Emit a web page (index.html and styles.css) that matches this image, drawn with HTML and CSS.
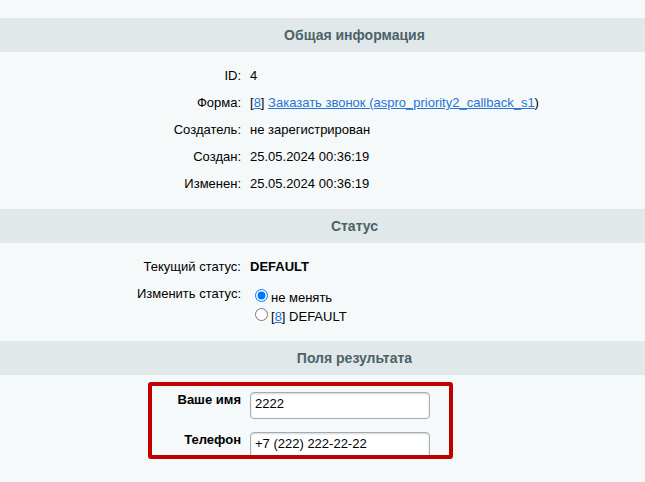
FILE: index.html
```html
<!DOCTYPE html>
<html lang="ru">
<head>
<meta charset="utf-8">
<title>Результат формы</title>
<link rel="stylesheet" href="styles.css">
</head>
<body>
<div class="page">
  <div class="heading">Общая информация</div>
  <div class="section">
    <div class="row"><div class="label">ID:</div><div class="value">4</div></div>
    <div class="row"><div class="label">Форма:</div><div class="value">[<a href="#">8</a>] <a href="#">Заказать звонок (aspro_priority2_callback_s1</a>)</div></div>
    <div class="row"><div class="label">Создатель:</div><div class="value">не зарегистрирован</div></div>
    <div class="row"><div class="label">Создан:</div><div class="value">25.05.2024 00:36:19</div></div>
    <div class="row"><div class="label">Изменен:</div><div class="value">25.05.2024 00:36:19</div></div>
  </div>

  <div class="heading">Статус</div>
  <div class="section section-status">
    <div class="row"><div class="label">Текущий статус:</div><div class="value"><b>DEFAULT</b></div></div>
    <div class="row">
      <div class="label">Изменить статус:</div>
      <div class="value">
        <label class="opt"><input type="radio" name="st" checked><span>не менять</span></label>
        <label class="opt"><input type="radio" name="st"><span>[<a href="#">8</a>] DEFAULT</span></label>
      </div>
    </div>
  </div>

  <div class="heading">Поля результата</div>
  <div class="section-result">
    <div class="frame">
      <div class="frow"><div class="flabel">Ваше имя</div><div class="fvalue"><input class="field" type="text" value="2222"></div></div>
      <div class="frow"><div class="flabel">Телефон</div><div class="fvalue"><input class="field" type="text" value="+7 (222) 222-22-22"></div></div>
    </div>
  </div>
</div>
</body>
</html>
```

FILE: styles.css
```css
html, body {
  margin: 0;
  padding: 0;
  background: #f5f9f9;
}
body {
  font-family: "Liberation Sans", Arial, sans-serif;
  font-size: 13px;
  color: #000;
  overflow: hidden;
}
.page {
  padding-top: 18px;
}
.heading {
  height: 34px;
  line-height: 34px;
  background: #e0e8ea;
  color: #4b6267;
  font-size: 14px;
  font-weight: bold;
  text-align: center;
  padding-left: 64px;
}
.section {
  padding: 11px 0 11px;
}
.section-status {
  padding-bottom: 10px;
}
.row {
  display: grid;
  grid-template-columns: 245px 1fr;
  line-height: 15px;
}
.label {
  text-align: right;
  padding: 5px 4px 7px 0;
}
.value {
  padding: 5px 0 7px 5px;
}
a {
  color: #2675d7;
  text-decoration: underline;
}
.opt {
  display: flex;
  align-items: center;
  height: 19px;
}
.opt input {
  margin: 0 3px 0 5px;
  width: 13px;
  height: 13px;
}
.opt span {
  padding-top: 4px;
}
.section-result {
  padding-top: 7px;
}
.frame {
  margin-left: 148px;
  width: 305px;
  height: 77px;
  box-sizing: border-box;
  border: 4px solid #c00000;
  border-radius: 3px;
  overflow: hidden;
}
.frow {
  display: grid;
  grid-template-columns: 93px 1fr;
  line-height: 15px;
  height: 40px;
}
.flabel {
  text-align: right;
  font-weight: bold;
  padding: 6px 4px 0 0;
}
.fvalue {
  padding: 6px 0 0 5px;
}
.field {
  display: block;
  width: 180px;
  height: 27px;
  box-sizing: border-box;
  margin: 0;
  padding: 0 4px 4px;
  border: 1px solid #a3abb3;
  border-radius: 4px;
  background: #fff;
  box-shadow: inset 0 1px 2px rgba(180, 188, 191, 0.6);
  font-family: "Liberation Sans", Arial, sans-serif;
  font-size: 13px;
  color: #000;
  outline: none;
}
```
